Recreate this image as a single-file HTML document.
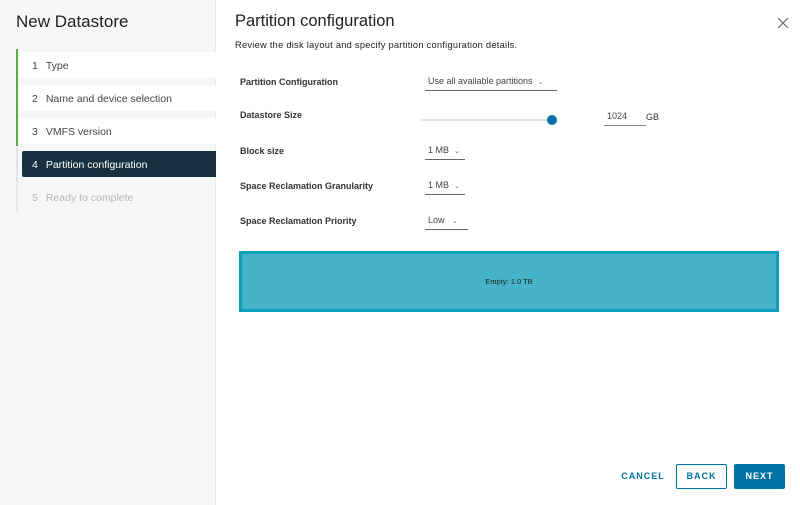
<!DOCTYPE html>
<html><head><style>
*{margin:0;padding:0;box-sizing:border-box}
body{width:800px;height:505px;overflow:hidden;background:#fff;font-family:"Liberation Sans",sans-serif;color:#333;position:relative}
.side{position:absolute;left:0;top:0;width:216px;height:505px;background:#f7f7f7;border-right:1px solid #e8e8e8}
.side h1{position:absolute;left:16px;top:12px;font-size:17px;font-weight:normal;color:#222}
.bar{position:absolute;left:16px;top:49px;width:2px;height:97px;background:#5aac44}
.bar2{position:absolute;left:16px;top:146px;width:2px;height:66px;background:#e6e6e6}
.step{position:absolute;left:19px;width:197px;height:26px;font-size:10.5px;line-height:28px;padding-left:13px;background:#fff;color:#444}
.step b{font-weight:normal;margin-right:8px}
.act{left:22px;width:194px;background:#17303f;color:#fff;padding-left:10px;border-radius:2px 0 0 2px}
.dis{background:transparent;color:#b5b5b5}
.t{position:absolute;left:235px;top:12px;font-size:16.5px;color:#222}
.sub{position:absolute;left:235px;top:40px;font-size:9.3px;letter-spacing:0.25px;color:#222}
.lbl{position:absolute;left:240px;font-size:9px;font-weight:bold;color:#333}
.sel{position:absolute;left:425px;font-size:9px;color:#444;border-bottom:1px solid #666;height:15px;padding-left:3px}
.sel i{font-style:normal;font-size:7px;color:#666;margin-left:5px}
.x{position:absolute;left:776px;top:16px;width:14px;height:14px}
.box{position:absolute;left:239px;top:251px;width:540px;height:61px;background:#47b3c8;border:3px solid #0aa0bd;font-size:7.5px;text-align:center;line-height:55px;color:#222}
.btn{position:absolute;top:464px;height:25px;font-size:9px;font-weight:bold;letter-spacing:1px;line-height:25px;text-align:center;color:#0072a3}
</style></head><body>
<div class="side">
<h1>New Datastore</h1>
<div class="bar"></div><div class="bar2"></div>
<div class="step" style="top:52px"><b>1</b>Type</div>
<div class="step" style="top:85px"><b>2</b>Name and device selection</div>
<div class="step" style="top:118px"><b>3</b>VMFS version</div>
<div class="step act" style="top:151px"><b>4</b>Partition configuration</div>
<div class="step dis" style="top:184px"><b>5</b>Ready to complete</div>
</div>
<div class="t">Partition configuration</div>
<div class="sub">Review the disk layout and specify partition configuration details.</div>
<svg class="x" viewBox="0 0 14 14"><path d="M2 2L12 12M12 2L2 12" stroke="#666" stroke-width="1.2"/></svg>
<div class="lbl" style="top:77px">Partition Configuration</div>
<div class="lbl" style="top:110px">Datastore Size</div>
<div class="lbl" style="top:146px">Block size</div>
<div class="lbl" style="top:181px">Space Reclamation Granularity</div>
<div class="lbl" style="top:216px">Space Reclamation Priority</div>
<div class="sel" style="top:76px;width:132px">Use all available partitions<i>⌄</i></div>
<div style="position:absolute;left:421px;top:119px;width:130px;height:2px;background:#e3e3e3"></div>
<div style="position:absolute;left:547px;top:115px;width:10px;height:10px;border-radius:50%;background:#0072a3"></div>
<div class="sel" style="left:604px;top:111px;width:42px;border-color:#888">1024</div>
<div style="position:absolute;left:646px;top:112px;font-size:9px">GB</div>
<div class="sel" style="top:145px;width:40px">1 MB<i>⌄</i></div>
<div class="sel" style="top:180px;width:40px">1 MB<i>⌄</i></div>
<div class="sel" style="top:215px;width:43px">Low <i>⌄</i></div>
<div class="box">Empty: 1.0 TB</div>
<div class="btn" style="left:618px;width:50px">CANCEL</div>
<div class="btn" style="left:676px;width:51px;border:1px solid #0072a3;border-radius:2px;line-height:23px">BACK</div>
<div class="btn" style="left:734px;width:51px;background:#0072a3;color:#fff;border-radius:2px">NEXT</div>
</body></html>
